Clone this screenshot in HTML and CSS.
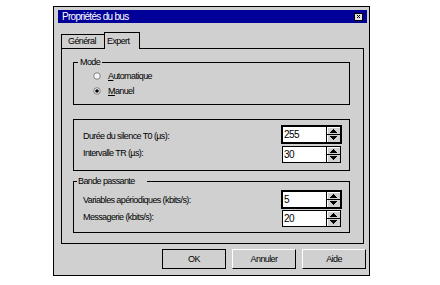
FILE: index.html
```html
<html>
<head>
<link rel="stylesheet" href="styles.css">
	<title>Propriétés du bus</title>
</head>
<body>
<div class="window">
	<div class="titlebar">
		<span class="title">Propriétés du bus</span>
		<svg class="close" width="9" height="8" viewBox="0 0 9 8" shape-rendering="crispEdges">
			<rect x="0.5" y="0.5" width="8" height="7" fill="#e0e0e0" stroke="#000"/>
			<path d="M3 2h1v1h1v-1h1v1h-1v1h1v1h-1v-1h-1v1h-1v-1h1v-1h-1z" fill="#000"/>
		</svg>
	</div>

	<div class="tabs">
		<div class="tab">Général</div>
		<div class="tab active">Expert</div>
	</div>

	<div class="panel">
		<div class="group mode">
			<span class="caption">Mode</span>
			<div class="radio">
				<svg width="8" height="8" viewBox="0 0 8 8"><circle cx="4" cy="4" r="3.3" fill="#f4f4f4" stroke="#808080"/></svg>
				<span><u>A</u>utomatique</span>
			</div>
			<div class="radio">
				<svg width="8" height="8" viewBox="0 0 8 8"><circle cx="4" cy="4" r="3.3" fill="#f4f4f4" stroke="#808080"/><circle cx="4" cy="4" r="1.8" fill="#000"/></svg>
				<span><u>M</u>anuel</span>
			</div>
		</div>

		<div class="group fields timing">
			<div class="labels">
				<div>Durée du silence T0 (µs):</div>
				<div>Intervalle TR (µs):</div>
			</div>
			<div class="spins">
				<div class="spin focus"><span class="val">255</span><span class="arrows"><svg width="13" height="15" viewBox="0 0 13 15" shape-rendering="crispEdges"><path d="M0 0.5h13M0.5 0v15" stroke="#fff"/><path d="M0 7.5h13" stroke="#000"/><path d="M0.5 8v7" stroke="#fff"/><polygon points="6.5,2 10,6 3,6" fill="#000"/><polygon points="3,9 10,9 6.5,13" fill="#000"/></svg></span></div>
				<div class="spin"><span class="val">30</span><span class="arrows"><svg width="13" height="15" viewBox="0 0 13 15" shape-rendering="crispEdges"><path d="M0 0.5h13M0.5 0v15" stroke="#fff"/><path d="M0 7.5h13" stroke="#000"/><path d="M0.5 8v7" stroke="#fff"/><polygon points="6.5,2 10,6 3,6" fill="#000"/><polygon points="3,9 10,9 6.5,13" fill="#000"/></svg></span></div>
			</div>
		</div>

		<div class="group fields band">
			<span class="caption">Bande passante</span>
			<div class="labels">
				<div>Variables apériodiques (kbits/s):</div>
				<div>Messagerie (kbits/s):</div>
			</div>
			<div class="spins">
				<div class="spin focus"><span class="val">5</span><span class="arrows"><svg width="13" height="15" viewBox="0 0 13 15" shape-rendering="crispEdges"><path d="M0 0.5h13M0.5 0v15" stroke="#fff"/><path d="M0 7.5h13" stroke="#000"/><path d="M0.5 8v7" stroke="#fff"/><polygon points="6.5,2 10,6 3,6" fill="#000"/><polygon points="3,9 10,9 6.5,13" fill="#000"/></svg></span></div>
				<div class="spin"><span class="val">20</span><span class="arrows"><svg width="13" height="15" viewBox="0 0 13 15" shape-rendering="crispEdges"><path d="M0 0.5h13M0.5 0v15" stroke="#fff"/><path d="M0 7.5h13" stroke="#000"/><path d="M0.5 8v7" stroke="#fff"/><polygon points="6.5,2 10,6 3,6" fill="#000"/><polygon points="3,9 10,9 6.5,13" fill="#000"/></svg></span></div>
			</div>
		</div>
	</div>

	<div class="buttons">
		<button class="btn default">OK</button>
		<button class="btn">Annuler</button>
		<button class="btn">Aide</button>
	</div>
</div>
</body>
</html>
```

FILE: styles.css
```css
body {
	margin: 0;
	background-color: #FFF;
	color: #000;
	font-family: "Liberation Sans", Arial, sans-serif;
	font-size: 9px;
	letter-spacing: -0.6px;
}

.window {
	margin: 6px 0 0 53px;
	width: 317px;
	height: 270px;
	box-sizing: border-box;
	border: 1px solid #000;
	background-color: #D0D0D0;
}

.titlebar {
	margin: 3px 2px 0 4px;
	height: 13px;
	padding: 0 4px 0 4px;
	display: flex;
	align-items: center;
	justify-content: space-between;
	background-color: #000099;
	color: #FFF;
	font-size: 10px;
	letter-spacing: -0.7px;
}

.close {
	display: block;
}

.tabs {
	margin: 9px 0 0 7px;
	height: 16px;
	display: flex;
	align-items: flex-end;
}

.tab {
	height: 14px;
	box-sizing: border-box;
	border: 1px solid #000;
	border-bottom: none;
	line-height: 12px;
	background-color: #D0D0D0;
}

.tab:first-child {
	width: 44px;
	padding-left: 6px;
}

.tab.active {
	position: relative;
	z-index: 1;
	width: 36px;
	height: 17px;
	margin: 0 0 -1px -1px;
	padding: 2px 0 0 2px;
}

.panel {
	margin-left: 7px;
	width: 303px;
	height: 196px;
	box-sizing: border-box;
	border: 1px solid #000;
	padding: 13px 0 0 11px;
}

.group {
	position: relative;
	width: 277px;
	box-sizing: border-box;
	border: 1px solid #000;
}

.caption {
	position: absolute;
	top: -6px;
	left: 4px;
	padding: 0 2px;
	line-height: 11px;
	background-color: #D0D0D0;
}

.mode {
	height: 43px;
	padding: 5px 0 0 19px;
}

.radio {
	height: 15px;
	display: flex;
	align-items: center;
}

.radio svg {
	margin-right: 7px;
}

.fields {
	height: 52px;
	display: flex;
	justify-content: space-between;
	padding: 0 8px 0 9px;
}

.timing {
	margin-top: 14px;
}

.band {
	margin-top: 10px;
}

.band .caption {
	left: 3px;
	padding: 0 12px 0 1px;
}

.labels {
	line-height: 17px;
}

.timing .labels {
	padding-top: 8px;
}

.band .labels {
	padding-top: 10px;
}

.spins {
	display: flex;
	flex-direction: column;
}

.timing .spins {
	padding-top: 6px;
	gap: 3px;
}

.band .spins {
	padding-top: 9px;
	gap: 2px;
}

.spin {
	width: 59px;
	height: 17px;
	box-sizing: border-box;
	border: 1px solid #000;
	display: flex;
	background-color: #FFF;
}

.spin.focus {
	outline: 1px solid #000;
}

.val {
	flex: 1;
	padding-left: 1px;
	line-height: 15px;
	font-size: 10px;
}

.arrows {
	width: 14px;
	box-sizing: border-box;
	border-left: 1px solid #000;
	background-color: #D0D0D0;
}

.arrows svg {
	display: block;
}

.buttons {
	margin-top: 5px;
	padding-right: 3px;
	display: flex;
	justify-content: flex-end;
	gap: 6px;
}

.btn {
	width: 64px;
	height: 20px;
	padding: 0;
	box-sizing: border-box;
	border: 1px solid;
	border-color: #FFF #000 #000 #FFF;
	background-color: #D0D0D0;
	color: #000;
	font: inherit;
	letter-spacing: inherit;
}

.btn.default {
	border-color: #000;
}
```
